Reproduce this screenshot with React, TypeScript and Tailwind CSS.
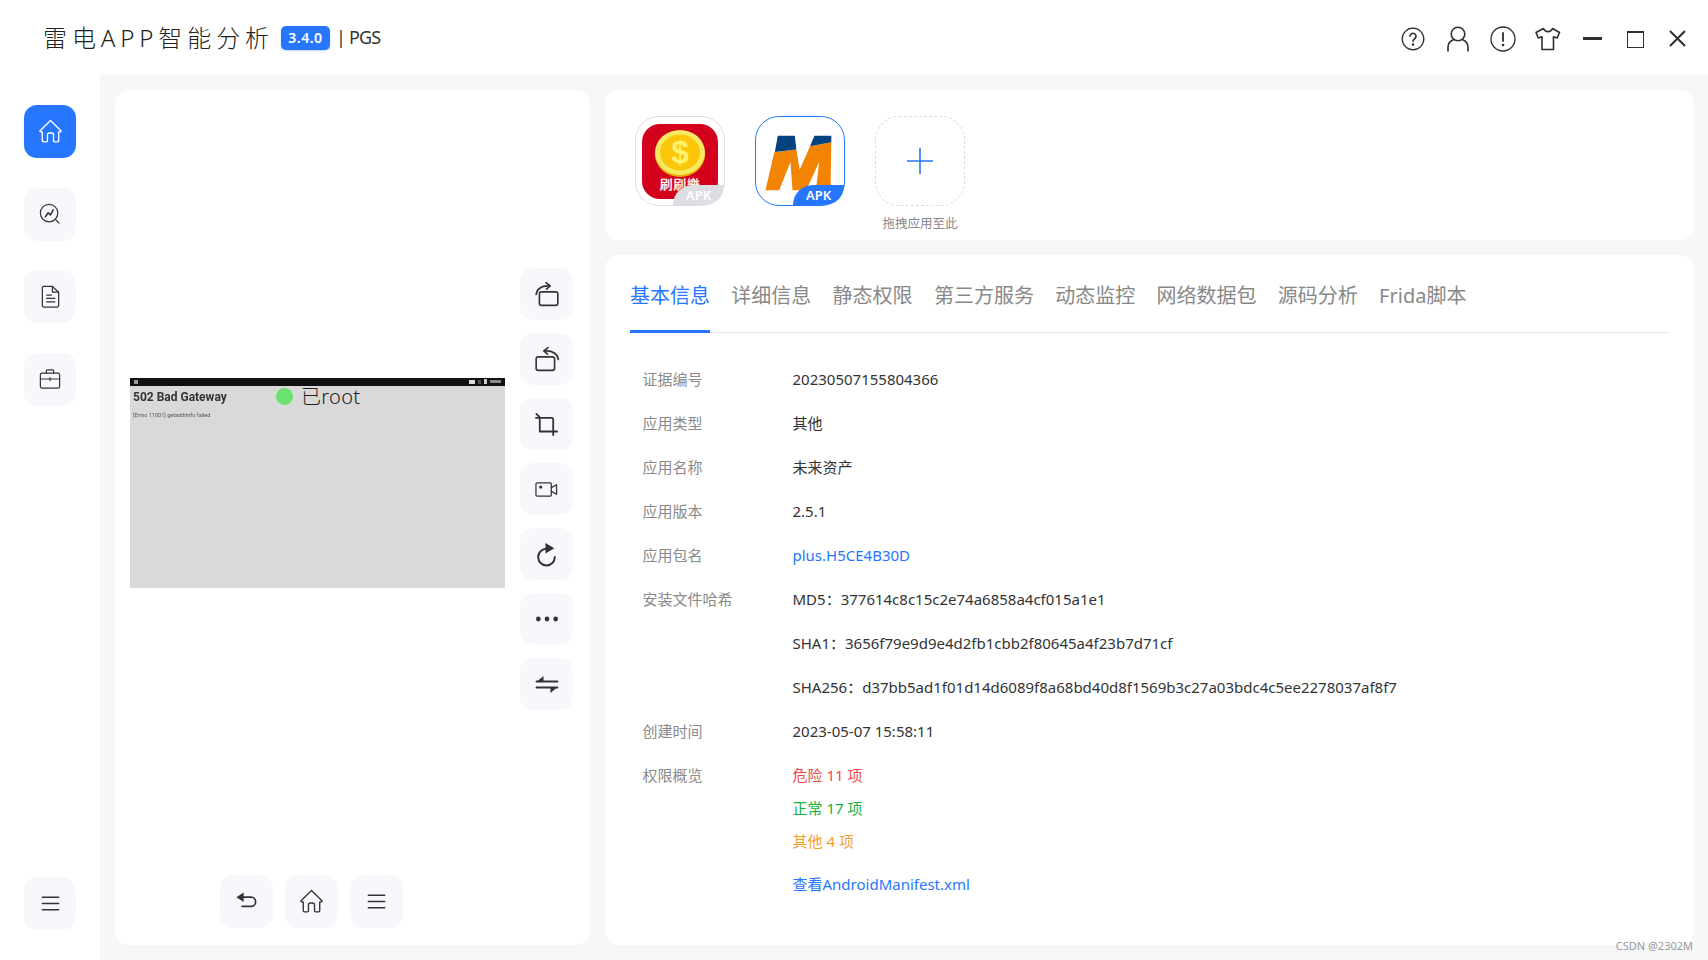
import type { ReactNode } from "react";

const line = {
  fill: "none",
  stroke: "currentColor",
  strokeWidth: 1.3,
  strokeLinecap: "round" as const,
  strokeLinejoin: "round" as const,
};

function Svg({ size = 24, children }: { size?: number; children: ReactNode }) {
  return (
    <svg width={size} height={size} viewBox="0 0 24 24" {...line}>
      {children}
    </svg>
  );
}

const HomeIcon = () => (
  <Svg size={25}>
    <path d="M12 1.500 22 11.200c.4.5.1 1.100-.5 1.100h-1.600v8.400c0 .7-.5 1.200-1.200 1.200h-2.800c-.6 0-1-.4-1-1v-5.700c0-1-.8-1.800-1.900-1.800h-2c-1.100 0-1.900.8-1.900 1.800v5.700c0 .6-.4 1-1 1H5.300c-.7 0-1.200-.5-1.200-1.200v-8.400H2.500c-.6 0-.9-.6-.5-1.100Z" />
  </Svg>
);

const AnalysisIcon = () => (
  <Svg size={22}>
    <circle cx="11" cy="11" r="9.500" />
    <path d="m7 15 3-4.300 2.500 2.300 3-5.500" strokeWidth="1.700" />
    <path d="m18.500 18.500 3.500 3.500" />
  </Svg>
);

const DocIcon = () => (
  <Svg size={23}>
    <path d="M3.500 3c0-.8.6-1.500 1.400-1.500H14l6.500 6v14c0 .8-.6 1.500-1.400 1.500H4.900c-.8 0-1.400-.7-1.400-1.500Z" />
    <path d="M14 1.500v6h6.500M8 10.500h5M8 14h8.500M8 17.500h8.500" />
  </Svg>
);

const CaseIcon = () => (
  <Svg size={22}>
    <rect x="1.500" y="5.500" width="21" height="16.500" rx="1.800" />
    <path d="M8 5.500V3.300C8 2.600 8.500 2 9.200 2h5.600c.7 0 1.200.6 1.200 1.300v2.200M1.500 12h21M12 10.500v3" />
  </Svg>
);

const MenuIcon = () => (
  <Svg size={23}>
    <path d="M3.500 5.500h17M3.500 12h17M3.500 18.500h17" strokeWidth="1.600" />
  </Svg>
);

const RotateRightIcon = () => (
  <Svg size={26}>
    <rect x="5" y="10" width="17" height="12.500" rx="2" strokeWidth="1.500" />
    <path d="M2 12.500C2.500 7.500 7 4 13.500 4.500" strokeWidth="1.500" />
    <path d="m11 1.500 4 3-3.500 3" strokeWidth="1.500" />
  </Svg>
);

const RotateLeftIcon = () => (
  <Svg size={26}>
    <rect x="2" y="10" width="17" height="12.500" rx="2" strokeWidth="1.500" />
    <path d="M22.500 12.500C22 7.500 17 4 10.500 4.500" strokeWidth="1.500" />
    <path d="m13 1.500-4 3 3.500 3" strokeWidth="1.500" />
  </Svg>
);

const CropIcon = () => (
  <Svg size={23}>
    <path d="M1.500 1 5 4.500v14.800h18" strokeWidth="1.900" />
    <path d="M1 5h16.500c.8 0 1.500.7 1.500 1.500V23" strokeWidth="1.900" />
  </Svg>
);

const VideoIcon = () => (
  <Svg size={23}>
    <rect x="1" y="5" width="16" height="14" rx="1.200" />
    <path d="m17 10 5.500-3v10L17 14" />
    <circle cx="6" cy="9.500" r="1" fill="currentColor" />
  </Svg>
);

const RefreshIcon = () => (
  <Svg size={25}>
    <path d="M12 6.500a8 8 0 1 0 8 8" strokeWidth="1.900" />
    <path d="M11 1 19.500 6 11 11Z" fill="currentColor" stroke="none" />
  </Svg>
);

const DotsIcon = () => (
  <Svg size={26}>
    <circle cx="4" cy="12" r="2.200" fill="currentColor" stroke="none" />
    <circle cx="12" cy="12" r="2.200" fill="currentColor" stroke="none" />
    <circle cx="20" cy="12" r="2.200" fill="currentColor" stroke="none" />
  </Svg>
);

const SwapIcon = () => (
  <Svg size={24}>
    <path d="M1.500 9.500h21M1.500 15.500h21" strokeWidth="1.800" />
    <path d="M8.500 4v5.500H2Z" fill="currentColor" stroke="none" />
    <path d="M15.500 21v-5.500H22Z" fill="currentColor" stroke="none" />
  </Svg>
);

const BackIcon = () => (
  <Svg size={23}>
    <path d="M5 7.500h12c2.600 0 4.500 2.100 4.500 4.700S19.600 17 17 17H7.500" strokeWidth="1.800" />
    <path d="M9 2.500v10L1.500 7.500Z" fill="currentColor" stroke="none" />
  </Svg>
);

function IconBtn({ children, className = "h-[53px] w-[52px]" }: { children: ReactNode; className?: string }) {
  return (
    <button className={`flex items-center justify-center rounded-[13px] bg-[#f8f8fc] text-[#333333] ${className}`}>
      {children}
    </button>
  );
}

function ApkTag({ active }: { active: boolean }) {
  return (
    <span
      className={
        active
          ? "absolute bottom-0 right-0 flex h-5 w-[51px] items-center justify-center rounded-tl-[24px] rounded-br-[23px] bg-[#2776ff] text-[13px] font-semibold leading-none text-white"
          : "absolute bottom-0 right-0 flex h-5 w-[51px] items-center justify-center rounded-tl-[24px] rounded-br-[23px] bg-[#dddde4] text-[13px] font-semibold leading-none text-white"
      }
    >
      APK
    </span>
  );
}

function CoinApp() {
  return (
    <div className="relative flex h-[90px] w-[90px] items-center justify-center rounded-[24px] border border-[#dcdce4]">
      <div className="flex h-[75px] w-[76px] flex-col items-center rounded-[18px] bg-[#d4011d] pt-[6px]">
        <svg width="50" height="47" viewBox="0 0 50 47">
          <ellipse cx="25" cy="24.500" rx="25" ry="22.500" fill="#e8a903" />
          <ellipse cx="25" cy="22.500" rx="25" ry="22.500" fill="#f6ea63" />
          <ellipse cx="25" cy="22.500" rx="20" ry="18" fill="#fcc70b" />
          <text x="25" y="33" textAnchor="middle" fontSize="31" fontWeight="700" fill="#fff36d" fontFamily="Liberation Sans, sans-serif">
            $
          </text>
        </svg>
        <span className="mt-[1px] text-[13px] font-bold leading-none tracking-[0.500px] text-[#ffe9e9]">刷刷樂</span>
      </div>
      <ApkTag active={false} />
    </div>
  );
}

function MApp() {
  return (
    <div className="relative h-[90px] w-[90px] rounded-[24px] border border-[#2776ff]">
      <svg width="88" height="88" viewBox="0 0 90 90">
        <path d="M18.700 36 41.300 33.300 44.700 54 55.300 30 77 25.700 76.300 70.700 61.300 75 64.700 45.700 51.300 75H37.300L35.300 45.700 23.700 75H9.700Z" fill="#f28303" />
        <path d="M22.300 19.300H39.700L41.300 33.300 19.300 35.700Z" fill="#04427f" />
        <path d="M59.700 19.300H77V25.700L55.300 30Z" fill="#04427f" />
      </svg>
      <ApkTag active />
    </div>
  );
}

const tabs = ["基本信息", "详细信息", "静态权限", "第三方服务", "动态监控", "网络数据包", "源码分析", "Frida脚本"];

function InfoRow({ label, children }: { label?: string; children: ReactNode }) {
  return (
    <div className="flex h-[44px] items-center">
      <span className="w-[150px] shrink-0 text-[#8a8a8a]">{label}</span>
      <span className="text-[#333333]">{children}</span>
    </div>
  );
}

export default function App() {
  return (
    <div className="relative flex h-[960px] w-[1708px] flex-col overflow-hidden bg-white font-['Noto_Sans','Noto_Sans_CJK_SC',sans-serif] text-[15px]">
      {/* title bar */}
      <header className="flex h-[75px] shrink-0 items-center pl-[43px] pr-[22px]">
        <h1 className="text-[24px] font-light leading-none tracking-[4.900px] text-[#222222]">雷电APP智能分析</h1>
        <span className="ml-[7px] flex h-[24px] w-[49px] items-center justify-center rounded-[5px] bg-[#2776ff] text-[14px] font-semibold tracking-[0.500px] text-white shadow-[0_1px_2px_rgba(39,118,255,0.3)]">
          3.4.0
        </span>
        <span className="ml-[6px] text-[18px] tracking-[-0.800px] text-[#333333]">| PGS</span>
        <div className="ml-auto mt-[2px] flex items-center text-[#2e2e2e]">
          <svg width="24" height="24" viewBox="0 0 24 24" {...line}>
            <circle cx="12" cy="12" r="10.800" />
            <path d="M9 9.300a3 3 0 1 1 4.600 2.500c-1 .7-1.600 1.200-1.600 2.400" strokeWidth="1.600" />
            <circle cx="12" cy="17.500" r=".6" fill="currentColor" />
          </svg>
          <svg className="ml-[21px]" width="24" height="26" viewBox="0 0 24 26" {...line} strokeWidth={1.6}>
            <circle cx="12" cy="8" r="6.800" />
            <path d="M2 25v-4c0-3.500 2-5.800 5.200-7.200M22 25v-4c0-3.500-2-5.800-5.200-7.200" />
          </svg>
          <svg className="ml-[20px]" width="26" height="26" viewBox="0 0 26 26" {...line}>
            <circle cx="13" cy="13" r="12" />
            <path d="M13 7v8" strokeWidth="1.800" />
            <circle cx="13" cy="19" r=".7" fill="currentColor" />
          </svg>
          <svg className="ml-[19px]" width="26" height="24" viewBox="0 0 26 24" {...line} strokeWidth={1.6}>
            <path d="M8.500 1.500c1 2.300 2.500 3.300 4.500 3.300s3.500-1 4.500-3.300l7 4-2.300 5.500-3.700-1.200V22.500H7V9.800L3.300 11 1 5.500Z" />
          </svg>
          <span className="ml-[22px] h-[3px] w-[19px] bg-[#2e2e2e]" />
          <span className="ml-[25px] mt-[2px] h-[17px] w-[17px] border border-t-[2px] border-[#2e2e2e]" />
          <svg className="ml-[25px]" width="17" height="17" viewBox="0 0 17 17" fill="none" stroke="currentColor" strokeWidth="2">
            <path d="m1 1 15 15M16 1 1 16" />
          </svg>
        </div>
      </header>

      <div className="flex min-h-0 flex-1">
        {/* sidebar */}
        <aside className="flex w-[100px] shrink-0 flex-col items-center justify-between py-[30px]">
          <nav className="flex flex-col gap-[29.500px]">
            <button className="flex h-[53px] w-[52px] items-center justify-center rounded-[13px] bg-[#2776ff] text-white">
              <HomeIcon />
            </button>
            <IconBtn>
              <AnalysisIcon />
            </IconBtn>
            <IconBtn>
              <DocIcon />
            </IconBtn>
            <IconBtn>
              <CaseIcon />
            </IconBtn>
          </nav>
          <IconBtn>
            <MenuIcon />
          </IconBtn>
        </aside>

        {/* workspace */}
        <main className="flex flex-1 gap-[15px] bg-[#f6f7f9] pb-[15px] pl-[15px] pr-[14px] pt-[15px]">
          {/* device panel */}
          <section className="flex w-[475px] shrink-0 flex-col rounded-[14px] bg-white">
            <div className="flex h-[785px] items-center gap-[15px] pl-[15px]">
              <div className="relative h-[210px] w-[375px] bg-[#d9d9d9]">
                <div className="flex h-[8px] items-center justify-between bg-[#111111] px-[4px]">
                  <span className="h-[4px] w-[4px] bg-[#999999]" />
                  <span className="flex items-center gap-[3px]">
                    <span className="h-[4px] w-[6px] bg-[#dddddd]" />
                    <span className="h-[4px] w-[3px] bg-[#555555]" />
                    <span className="h-[5px] w-[3px] bg-[#cccccc]" />
                    <span className="h-[3px] w-[11px] bg-[#888888]" />
                  </span>
                </div>
                <p className="pl-[3px] pt-[3px] font-['Roboto',sans-serif] text-[12px] font-bold leading-[16px] text-[#333333] blur-[0.4px]">
                  502 Bad Gateway
                </p>
                <p className="pl-[3px] pt-[6px] font-['Roboto',sans-serif] text-[5.500px] leading-[8px] text-[#555555] blur-[0.3px]">
                  [Errno 11001] getaddrinfo failed
                </p>
                {/* root status sits over the mirrored screen */}
                <div className="absolute left-[146px] top-[8px] flex h-[22px] items-center gap-[8px]">
                  <span className="h-[17px] w-[17px] rounded-full bg-[#69e26f]" />
                  <span className="text-[20px] font-light leading-none tracking-[0.300px] text-[#222222]">已root</span>
                </div>
              </div>
              <div className="mt-[13px] flex flex-col gap-[13px]">
                <IconBtn className="h-[52px] w-[53px]">
                  <RotateRightIcon />
                </IconBtn>
                <IconBtn className="h-[52px] w-[53px]">
                  <RotateLeftIcon />
                </IconBtn>
                <IconBtn className="h-[52px] w-[53px]">
                  <CropIcon />
                </IconBtn>
                <IconBtn className="h-[52px] w-[53px]">
                  <VideoIcon />
                </IconBtn>
                <IconBtn className="h-[52px] w-[53px]">
                  <RefreshIcon />
                </IconBtn>
                <IconBtn className="h-[52px] w-[53px]">
                  <DotsIcon />
                </IconBtn>
                <IconBtn className="h-[52px] w-[53px]">
                  <SwapIcon />
                </IconBtn>
              </div>
            </div>
            <div className="flex gap-[12px] pl-[105px]">
              <IconBtn className="h-[53px] w-[53px]">
                <BackIcon />
              </IconBtn>
              <IconBtn className="h-[53px] w-[53px]">
                <HomeIcon />
              </IconBtn>
              <IconBtn className="h-[53px] w-[53px]">
                <MenuIcon />
              </IconBtn>
            </div>
          </section>

          <div className="flex min-w-0 flex-1 flex-col gap-[15px]">
            {/* app slots */}
            <section className="flex h-[150px] shrink-0 gap-[30px] rounded-[14px] bg-white pl-[30px] pt-[26px]">
              <CoinApp />
              <MApp />
              <div className="flex flex-col items-center">
                <div className="flex h-[90px] w-[90px] items-center justify-center rounded-[24px] border border-dashed border-[#dddddd] text-[#2776ff]">
                  <svg width="26" height="26" viewBox="0 0 26 26" fill="none" stroke="currentColor" strokeWidth="1.600">
                    <path d="M13 0v26M0 13h26" />
                  </svg>
                </div>
                <span className="mt-[9px] whitespace-nowrap text-[12.500px] leading-[17px] text-[#888888]">拖拽应用至此</span>
              </div>
            </section>

            {/* details */}
            <section className="flex-1 rounded-[14px] bg-white px-[25px]">
              <div className="flex h-[78px] gap-[21.300px] border-b border-[#e2e2ea]">
                {tabs.map((tab, i) => (
                  <span
                    key={tab}
                    className={
                      i === 0
                        ? "flex h-[78px] items-center whitespace-nowrap border-b-[3px] border-[#2776ff] pt-[6px] text-[20px] text-[#2776ff]"
                        : "flex h-[78px] items-center whitespace-nowrap border-b-[3px] border-transparent pt-[6px] text-[20px] text-[#888888]"
                    }
                  >
                    {tab}
                  </span>
                ))}
              </div>
              <div className="pl-[12.500px] pt-[24px]">
                <InfoRow label="证据编号">20230507155804366</InfoRow>
                <InfoRow label="应用类型">其他</InfoRow>
                <InfoRow label="应用名称">未来资产</InfoRow>
                <InfoRow label="应用版本">2.5.1</InfoRow>
                <InfoRow label="应用包名">
                  <a className="text-[#2776ff]">plus.H5CE4B30D</a>
                </InfoRow>
                <InfoRow label="安装文件哈希">MD5：377614c8c15c2e74a6858a4cf015a1e1</InfoRow>
                <InfoRow>SHA1：3656f79e9d9e4d2fb1cbb2f80645a4f23b7d71cf</InfoRow>
                <InfoRow>SHA256：d37bb5ad1f01d14d6089f8a68bd40d8f1569b3c27a03bdc4c5ee2278037af8f7</InfoRow>
                <InfoRow label="创建时间">2023-05-07 15:58:11</InfoRow>
                <div className="mt-[6px] flex">
                  <span className="w-[150px] shrink-0 leading-[33px] text-[#8a8a8a]">权限概览</span>
                  <div className="flex flex-col leading-[33px]">
                    <span className="text-[#f2484b]">危险 11 项</span>
                    <span className="text-[#16b238]">正常 17 项</span>
                    <span className="text-[#f5a12a]">其他 4 项</span>
                    <a className="mt-[10px] text-[#2776ff]">查看AndroidManifest.xml</a>
                  </div>
                </div>
              </div>
            </section>
          </div>
        </main>
      </div>

      <span className="absolute bottom-[7px] right-[15px] text-[11px] leading-[14px] text-[#999999]">CSDN @2302M</span>
    </div>
  );
}
